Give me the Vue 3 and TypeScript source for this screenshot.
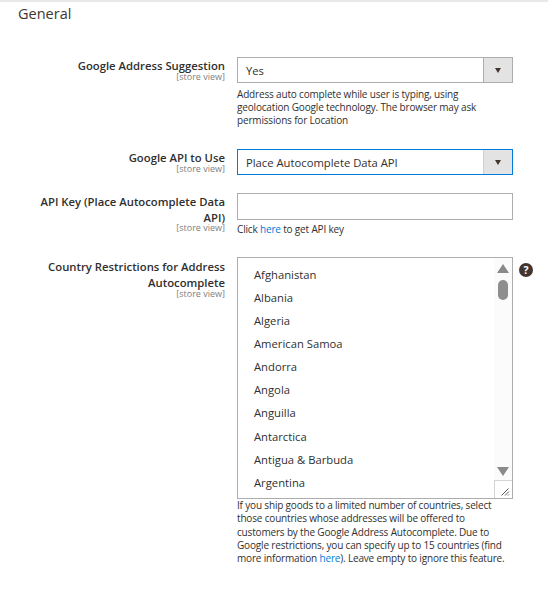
<script setup lang="ts">
const countries: string[] = ['Afghanistan','Albania','Algeria','American Samoa','Andorra','Angola','Anguilla','Antarctica','Antigua & Barbuda','Argentina']
</script>

<template>
  <div class="page">
    <h2 class="title">General</h2>

    <div class="row first">
      <div class="label"><span class="name">Google Address Suggestion</span><span class="scope">[store view]</span></div>
      <div class="control">
        <div class="select"><span class="value">Yes</span><span class="arrow"></span></div>
        <p class="note n1">Address auto complete while user is typing, using geolocation Google technology. The browser may ask permissions for Location</p>
      </div>
    </div>

    <div class="row second">
      <div class="label"><span class="name">Google API to Use</span><span class="scope">[store view]</span></div>
      <div class="control">
        <div class="select focus"><span class="value">Place Autocomplete Data API</span><span class="arrow"></span></div>
      </div>
    </div>

    <div class="row third">
      <div class="label"><span class="name">API Key (Place Autocomplete Data API)</span><span class="scope">[store view]</span></div>
      <div class="control">
        <div class="input"></div>
        <p class="note n2">Click <a>here</a> to get API key</p>
      </div>
    </div>

    <div class="row fourth">
      <div class="label"><span class="name">Country Restrictions for Address Autocomplete</span><span class="scope">[store view]</span></div>
      <div class="control">
        <div class="listbox">
          <ul class="options">
            <li v-for="c in countries" :key="c">{{ c }}</li>
          </ul>
          <div class="scrollbar">
            <svg class="up" width="12" height="9" viewBox="0 0 12 9"><path d="M6 0 L12 9 H0 Z" fill="#8a8a8a"/></svg>
            <span class="thumb"></span>
            <svg class="down" width="12" height="9" viewBox="0 0 12 9"><path d="M0 0 H12 L6 9 Z" fill="#8a8a8a"/></svg>
          </div>
          <div class="grip">
            <svg width="9" height="9" viewBox="0 0 9 9"><path d="M0.5 8.5 L7.5 1.5 M4 8.5 L8 4.5 M7 8.5 L8 7.5" stroke="#555" stroke-width="1" fill="none"/></svg>
          </div>
        </div>
        <p class="note n3">If you ship goods to a limited number of countries, select those countries whose addresses will be offered to customers by the Google Address Autocomplete. Due to Google restrictions, you can specify up to 15 countries (find more information <a>here</a>). Leave empty to ignore this feature.</p>
      </div>
      <span class="help">?</span>
    </div>
  </div>
</template>

<style scoped>
.page {
  width: 548px;
  height: 596px;
  box-sizing: border-box;
  overflow: hidden;
  background: #fff;
  border-top: 2px solid #e8e8e8;
  font-family: "Open Sans", sans-serif;
  color: #303030;
}
.title {
  margin: 0;
  padding: 2px 0 0 18px;
  font-size: 14.5px;
  line-height: 20px;
  font-weight: 400;
  color: #41362f;
}
.row {
  display: grid;
  grid-template-columns: 225px 276px 1fr;
  column-gap: 12px;
  align-items: start;
}
.row.first { margin-top: 33px; }
.row.second { margin-top: 22px; }
.row.third { margin-top: 18px; }
.row.fourth { margin-top: 21px; }
.label {
  display: flex;
  flex-direction: column;
  align-items: flex-end;
  text-align: right;
  box-sizing: border-box;
  padding: 1px 0 0 30px;
}
.fourth .label { padding-top: 2px; }
.name {
  font-size: 11.3px;
  line-height: 16px;
  font-weight: 600;
  color: #303030;
}
.scope {
  margin-top: -2px;
  font-size: 9px;
  line-height: 10px;
  color: #808080;
}
.third .scope { margin-top: -3px; }
.select {
  display: flex;
  height: 26px;
  box-sizing: border-box;
  border: 1px solid #adadad;
  align-items: stretch;
}
.select.focus { border-color: #007bdb; }
.value {
  flex: 1;
  padding-left: 8px;
  font-size: 11.25px;
  line-height: 25px;
  color: #303030;
}
.arrow {
  width: 28px;
  background: #e3e3e3;
  border-left: 1px solid #adadad;
  position: relative;
}
.focus .arrow { border-left-color: #d0d0d0; }
.arrow::after {
  content: "";
  position: absolute;
  left: 11px;
  top: 10px;
  border-style: solid;
  border-width: 5px 3px 0;
  border-color: #41362f transparent transparent;
}
.input {
  height: 27px;
  box-sizing: border-box;
  border: 1px solid #adadad;
  background: #fff;
}
.note {
  margin: 0;
  font-size: 10px;
  letter-spacing: -0.17px;
  line-height: 13px;
  color: #303030;
}
.note a { color: #007bdb; }
.n1 { margin-top: 5px; padding-right: 12px; }
.n2 { margin-top: 3px; }
.n3 { margin-top: 0; line-height: 13.3px; }
.listbox {
  position: relative;
  height: 242px;
  box-sizing: border-box;
  border: 1px solid #adadad;
  overflow: hidden;
}
.options {
  list-style: none;
  margin: 0;
  padding: 5px 0 0 16px;
}
.options li {
  height: 23.08px;
  font-size: 11.25px;
  line-height: 23px;
  color: #303030;
}
.scrollbar {
  position: absolute;
  top: 0;
  right: 0;
  bottom: 18px;
  width: 18px;
  background: #fbfbfb;
}
.up { position: absolute; left: 3px; top: 6px; }
.thumb {
  position: absolute;
  left: 4px;
  top: 22px;
  width: 10px;
  height: 20px;
  border-radius: 5px;
  background: #8e8e8e;
}
.down { position: absolute; left: 3px; bottom: 4px; }
.grip {
  position: absolute;
  right: 0;
  bottom: 0;
  width: 18px;
  height: 18px;
  box-sizing: border-box;
  border-left: 1px solid #d4d4d4;
  border-top: 1px solid #d4d4d4;
  background: #fff;
  display: flex;
  align-items: flex-end;
  justify-content: flex-end;
  padding: 0 2px 2px 0;
}
.help {
  margin-top: 6px;
  margin-left: -6px;
  width: 14px;
  height: 14px;
  border-radius: 50%;
  background: #41362f;
  color: #fff;
  font-size: 10.5px;
  font-weight: 700;
  line-height: 14px;
  text-align: center;
}
</style>

<style>
html, body { margin: 0; padding: 0; background: #fff; }
</style>
